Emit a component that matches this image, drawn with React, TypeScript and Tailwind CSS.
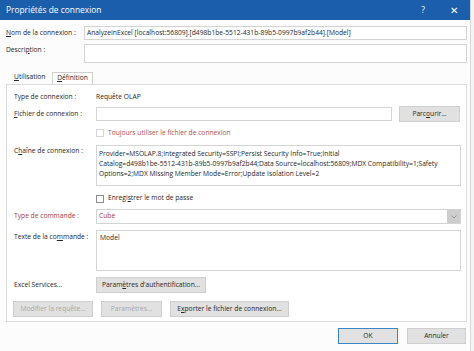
import React from "react";

const font = { fontFamily: '"Open Sans", "Noto Sans", sans-serif' };

const Label = ({ children, red }: { children: React.ReactNode; red?: boolean }) => (
  <span className={`w-[82px] shrink-0 ${red ? "text-[#a33b3b]" : "text-[#262626]"}`}>{children}</span>
);

const Btn = ({ children, disabled, w }: { children: React.ReactNode; disabled?: boolean; w: string }) => (
  <div
    className={`${w} h-[16px] flex items-center justify-center border border-[#cfcfcf] bg-[#e1e1e1] ${
      disabled ? "text-[#a8a8a8]" : "text-[#262626]"
    }`}
  >
    {children}
  </div>
);

const Box = ({ disabled }: { disabled?: boolean }) => (
  <div className={`w-[8px] h-[8px] border bg-white ${disabled ? "border-[#d6d6d6]" : "border-[#8c8c8c]"}`} />
);

export default function App() {
  return (
    <div
      className="w-[474px] h-[351px] bg-[#f4f4f4] overflow-hidden text-[6.7px] leading-none whitespace-nowrap"
      style={font}
    >
      <div className="w-[471px] h-[351px] bg-[#fcfcfc] border-r border-[#d8d8d8]">
        {/* barre de titre */}
        <div className="h-[20px] bg-[#1b5eab] flex items-center pl-[6px] text-white">
          <span className="text-[8.4px]">Propriétés de connexion</span>
          <span className="ml-auto text-[8.5px] mr-[25px]">?</span>
          <span className="text-[10px] mr-[12px]">✕</span>
        </div>

        <div className="pl-[6px] pr-[3px] pt-[6px] text-[#262626]">
          <div className="flex items-center h-[14px]">
            <span className="w-[78px]">
              <u>N</u>om de la connexion :
            </span>
            <div className="flex-1 h-[14px] border border-[#d4d4d4] bg-white flex items-center px-[2px]">
              AnalyzeInExcel [localhost:56809].[d498b1be-5512-431b-89b5-0997b9af2b44].[Model]
            </div>
          </div>
          <div className="flex mt-[4px] h-[19px]">
            <span className="w-[78px] pt-[3px]">
              Descri<u>p</u>tion :
            </span>
            <div className="flex-1 border border-[#d4d4d4] bg-white" />
          </div>

          {/* onglets */}
          <div className="flex items-end h-[13px] mt-[8px]">
            <span className="w-[46px] pl-[8px] pb-[3px]">
              <u>U</u>tilisation
            </span>
            <span className="h-[12px] w-[41px] border border-b-0 border-[#cfcfcf] bg-white flex items-center justify-center">
              <u>D</u>éfinition
            </span>
          </div>

          <div className="w-[461px] h-[238px] border border-[#dcdcdc] bg-white pl-[7px] pt-[5px] flex flex-col">
            <div className="flex items-center h-[14px]">
              <Label>Type de connexion :</Label>
              <span>Requête OLAP</span>
            </div>
            <div className="flex items-center h-[16px] mt-[2px]">
              <Label>
                <u>F</u>ichier de connexion :
              </Label>
              <div className="w-[296px] h-[14px] border border-[#d4d4d4] bg-white" />
              <div className="ml-[7px]">
                <Btn w="w-[61px]">
                  Parc<u>o</u>urir...
                </Btn>
              </div>
            </div>
            <div className="flex items-center h-[10px] mt-[6px] pl-[82px] gap-[4px]">
              <Box disabled />
              <span className="text-[#b0504d]">Toujours utiliser le fichier de connexion</span>
            </div>
            <div className="flex h-[41px] mt-[7px]">
              <span className="w-[82px] shrink-0 pt-[3px]">
                C<u>h</u>aîne de connexion :
              </span>
              <div className="w-[365px] border border-[#d4d4d4] bg-white px-[2px] pt-[3px] leading-[10px] flex flex-col">
                <span>Provider=MSOLAP.8;Integrated Security=SSPI;Persist Security Info=True;Initial</span>
                <span>
                  Catalog=d498b1be-5512-431b-89b5-0997b9af2b44;Data Source=localhost:56809;MDX Compatibility=1;Safety
                </span>
                <span>Options=2;MDX Missing Member Mode=Error;Update Isolation Level=2</span>
              </div>
            </div>
            <div className="flex items-center h-[9px] mt-[8px] pl-[82px] gap-[4px]">
              <Box />
              <span>
                Enregi<u>s</u>trer le mot de passe
              </span>
            </div>
            <div className="flex items-center h-[15px] mt-[6px]">
              <Label red>Type de commande :</Label>
              <div className="w-[365px] h-[15px] border border-[#d4d4d4] bg-white flex items-center pl-[2px] text-[#a33b3b]">
                <span>Cube</span>
                <div className="ml-auto w-[13px] h-[13px] bg-[#cdcdcd] flex items-center justify-center">
                  <svg width="6" height="4" viewBox="0 0 6 4">
                    <path d="M0.5 0.5 L3 3 L5.5 0.5" fill="none" stroke="#9a9a9a" strokeWidth="1" />
                  </svg>
                </div>
              </div>
            </div>
            <div className="flex h-[41px] mt-[6px]">
              <span className="w-[82px] shrink-0 pt-[4px]">
                Texte de la co<u>m</u>mande :
              </span>
              <div className="w-[365px] border border-[#d4d4d4] bg-white px-[3px] pt-[4px]">Model</div>
            </div>
            <div className="flex items-center h-[16px] mt-[6px]">
              <span className="w-[82px] shrink-0">Excel Services...</span>
              <Btn w="w-[110px]">
                Param<u>è</u>tres d'authentification...
              </Btn>
            </div>
            <div className="flex items-center h-[16px] mt-[8px] gap-[8px] -ml-[1px]">
              <Btn w="w-[80px]" disabled>
                Modifier la requête...
              </Btn>
              <Btn w="w-[61px]" disabled>
                Paramètres...
              </Btn>
              <Btn w="w-[119px]">
                E<u>x</u>porter le fichier de connexion...
              </Btn>
            </div>
          </div>

          <div className="flex justify-end gap-[9px] mt-[6px] pr-[1px]">
            <div className="w-[60px] h-[16px] flex items-center justify-center border border-[#3d86c6] bg-[#e1e1e1]">
              OK
            </div>
            <Btn w="w-[59px]">Annuler</Btn>
          </div>
        </div>
      </div>
    </div>
  );
}
